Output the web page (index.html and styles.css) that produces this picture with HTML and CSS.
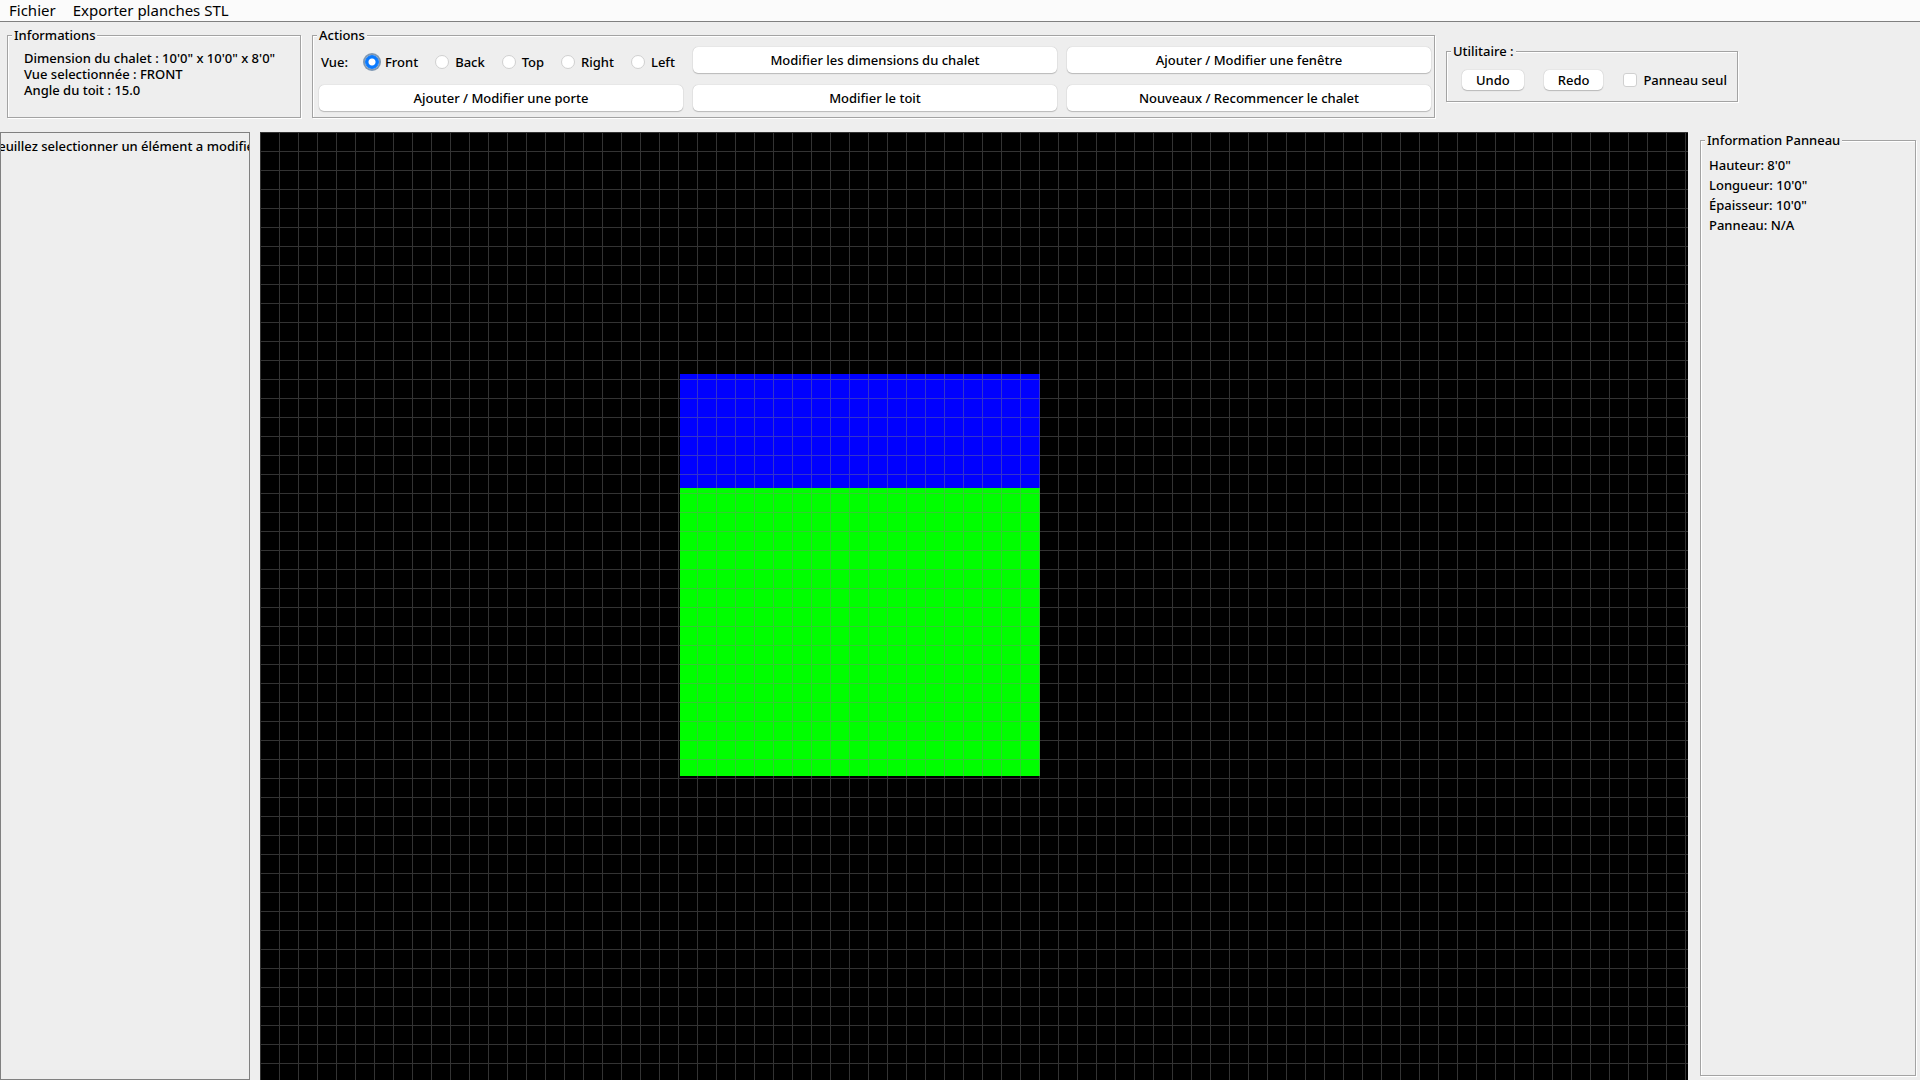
FILE: index.html
```html
<!DOCTYPE html>
<html lang="fr">
<head>
<meta charset="utf-8">
<title>Chalet</title>
<link rel="stylesheet" href="styles.css">
</head>
<body>
<nav class="menubar">
  <button class="menu" type="button">Fichier</button>
  <button class="menu" type="button">Exporter planches STL</button>
</nav>
<header class="toolbar">
  <fieldset class="group infos">
    <legend>Informations</legend>
    <p>Dimension du chalet : 10'0" x 10'0" x 8'0"</p>
    <p>Vue selectionnée : FRONT</p>
    <p>Angle du toit : 15.0</p>
  </fieldset>
  <fieldset class="group actions">
    <legend>Actions</legend>
    <div class="action-grid">
      <div class="views">
        <span>Vue:</span>
        <label class="choice"><input type="radio" name="vue" checked>Front</label>
        <label class="choice"><input type="radio" name="vue">Back</label>
        <label class="choice"><input type="radio" name="vue">Top</label>
        <label class="choice"><input type="radio" name="vue">Right</label>
        <label class="choice"><input type="radio" name="vue">Left</label>
      </div>
      <button class="btn" type="button">Modifier les dimensions du chalet</button>
      <button class="btn" type="button">Ajouter / Modifier une fenêtre</button>
      <button class="btn" type="button">Ajouter / Modifier une porte</button>
      <button class="btn" type="button">Modifier le toit</button>
      <button class="btn" type="button">Nouveaux / Recommencer le chalet</button>
    </div>
  </fieldset>
  <fieldset class="group tools">
    <legend>Utilitaire :</legend>
    <div class="tool-row">
      <button class="btn small" type="button">Undo</button>
      <button class="btn small" type="button">Redo</button>
      <label class="choice"><input type="checkbox">Panneau seul</label>
    </div>
  </fieldset>
</header>
<main class="workspace">
  <aside class="editor"><p>Veuillez selectionner un élément a modifier</p></aside>
  <div class="stage">
    <svg class="canvas" role="img" aria-label="Vue de face du chalet">
      <defs>
        <pattern id="grid" width="19" height="19" patternUnits="userSpaceOnUse">
          <path class="grid-line" d="M0 0H19V1H1V19H0Z"/>
        </pattern>
      </defs>
      <rect class="ground" width="100%" height="100%"/>
      <rect class="roof" x="420" y="242" width="360" height="114"/>
      <rect class="wall" x="420" y="356" width="360" height="288"/>
      <rect width="100%" height="100%" fill="url(#grid)"/>
    </svg>
  </div>
  <aside class="details">
    <fieldset class="group panel-info">
      <legend>Information Panneau</legend>
      <p>Hauteur: 8'0"</p>
      <p>Longueur: 10'0"</p>
      <p>Épaisseur: 10'0"</p>
      <p>Panneau: N/A</p>
    </fieldset>
  </aside>
</main>
</body>
</html>
```
FILE: styles.css
```css
* { box-sizing: border-box; }

body {
  margin: 0;
  height: 100vh;
  display: flex;
  flex-direction: column;
  overflow: hidden;
  background: #eee;
  color: #000;
  font: 500 13px/16px "Noto Sans", "Open Sans", sans-serif;
}

p { margin: 0; white-space: nowrap; }

button { font: inherit; color: inherit; border: 0; }

.menubar {
  display: flex;
  gap: 17px;
  padding: 0 9px;
  background: #fbfbfb;
  border-bottom: 1px solid #808080;
}

.menu {
  padding: 0;
  background: none;
  font-size: 15px;
  font-weight: 400;
  line-height: 21px;
}

.toolbar {
  display: flex;
  align-items: center;
  gap: 11px;
  padding: 5px 7px 14px;
}

.group {
  margin: 0;
  min-width: 0;
  border: 1px solid #a3a3a3;
  box-shadow: 1px 1px 0 #fff, inset 1px 1px 0 #fff;
}

.group legend {
  padding: 0 2px;
  background: #eee;
}

.infos {
  align-self: stretch;
  width: 294px;
  padding: 7px 16px 0;
}

.infos legend { margin-left: -12px; }

.actions { padding: 4px 3px 6px 6px; }

.actions legend { margin-left: -2px; }

.action-grid {
  display: grid;
  grid-template-columns: repeat(3, 364px);
  gap: 12px 10px;
}

.views {
  display: flex;
  align-items: center;
  justify-content: space-between;
  padding: 3px 8px 0 2px;
}

.choice {
  display: flex;
  align-items: center;
  gap: 6px;
}

.choice input {
  appearance: none;
  width: 14px;
  height: 14px;
  margin: 0;
  border: 1px solid #d0d0d0;
  background: #fff;
}

.choice input[type="radio"] { border-radius: 50%; }

.choice input[type="checkbox"] { border-radius: 3px; }

.choice input:checked {
  border-color: #0a7aff;
  background: radial-gradient(circle, #fff 3px, #0a7aff 4px);
  box-shadow: 0 0 0 2px #7f98b3;
}

.btn {
  height: 26px;
  padding: 0;
  border-radius: 5px;
  background: #fff;
  box-shadow: 0 0 1px #aaa, 0 1px 1px #bbb;
}

.tools { padding: 11px 10px 11px 15px; }

.tools legend { margin-left: -11px; }

.tool-row {
  display: flex;
  align-items: center;
  gap: 20px;
}

.small {
  height: 20px;
  padding: 0 14px;
}

.workspace {
  flex: 1;
  min-height: 0;
  display: grid;
  grid-template-columns: 250px minmax(0, 1fr) 216px;
  padding-right: 4px;
}

.editor {
  display: flex;
  justify-content: center;
  padding-top: 5px;
  border: 1px solid #808080;
  overflow: hidden;
}

.stage { padding: 0 12px 0 10px; }

.canvas {
  display: block;
  width: 100%;
  height: 100%;
}

.ground { fill: #000; }
.roof { fill: #00f; }
.wall { fill: #0f0; }
.grid-line { fill: #808080; fill-opacity: 0.4; }

.details {
  display: flex;
  padding-bottom: 4px;
}

.panel-info {
  flex: 1;
  padding: 7px 8px;
}

.panel-info legend { margin-left: -4px; }

.panel-info p { line-height: 20px; }
```
